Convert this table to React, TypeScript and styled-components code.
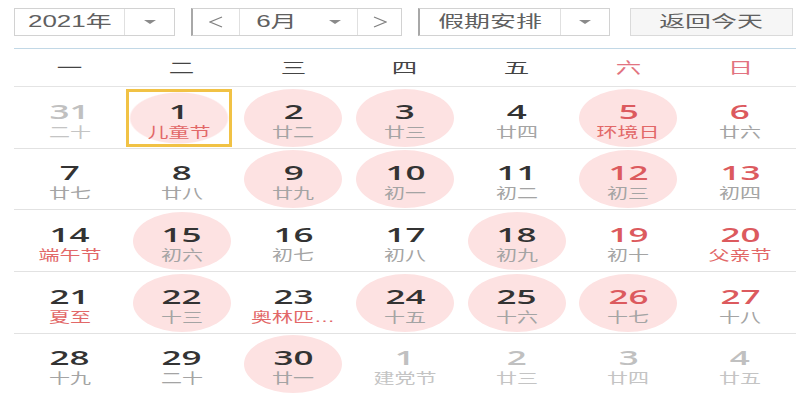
import React from 'react';
import styled, { createGlobalStyle } from 'styled-components';

type DayInfo = {
  d: number;
  l: string;
  other?: boolean;
  mark?: boolean;
  holiday?: boolean;
  selected?: boolean;
};

const weeks: DayInfo[][] = [
  [
    { d: 31, l: '二十', other: true },
    { d: 1, l: '儿童节', holiday: true, mark: true, selected: true },
    { d: 2, l: '廿二', mark: true },
    { d: 3, l: '廿三', mark: true },
    { d: 4, l: '廿四' },
    { d: 5, l: '环境日', holiday: true, mark: true },
    { d: 6, l: '廿六' },
  ],
  [
    { d: 7, l: '廿七' },
    { d: 8, l: '廿八' },
    { d: 9, l: '廿九', mark: true },
    { d: 10, l: '初一', mark: true },
    { d: 11, l: '初二' },
    { d: 12, l: '初三', mark: true },
    { d: 13, l: '初四' },
  ],
  [
    { d: 14, l: '端午节', holiday: true },
    { d: 15, l: '初六', mark: true },
    { d: 16, l: '初七' },
    { d: 17, l: '初八' },
    { d: 18, l: '初九', mark: true },
    { d: 19, l: '初十' },
    { d: 20, l: '父亲节', holiday: true },
  ],
  [
    { d: 21, l: '夏至', holiday: true },
    { d: 22, l: '十三', mark: true },
    { d: 23, l: '奥林匹…', holiday: true },
    { d: 24, l: '十五', mark: true },
    { d: 25, l: '十六', mark: true },
    { d: 26, l: '十七', mark: true },
    { d: 27, l: '十八' },
  ],
  [
    { d: 28, l: '十九' },
    { d: 29, l: '二十' },
    { d: 30, l: '廿一', mark: true },
    { d: 1, l: '建党节', other: true },
    { d: 2, l: '廿三', other: true },
    { d: 3, l: '廿四', other: true },
    { d: 4, l: '廿五', other: true },
  ],
];

const weekNames = ['一', '二', '三', '四', '五', '六', '日'];

export default function App(): JSX.Element {
  return (
    <>
      <GlobalStyle />
      <Page>
        <Toolbar>
          <Select $width={161}>
            <SelectText>
              <BarLabel>2021年</BarLabel>
            </SelectText>
            <ArrowSeg $width={49}>
              <Caret />
            </ArrowSeg>
          </Select>

          <Select $width={211} $strong>
            <StepSeg $width={46}>
              <Chevron dir="left" />
            </StepSeg>
            <MonthSeg>
              <SelectText>
                <BarLabel>6月</BarLabel>
              </SelectText>
              <ArrowSeg $width={44} $plain>
                <Caret />
              </ArrowSeg>
            </MonthSeg>
            <StepSeg $width={43} $last>
              <Chevron dir="right" />
            </StepSeg>
          </Select>

          <Select $width={192} $strong>
            <SelectText>
              <BarLabel>假期安排</BarLabel>
            </SelectText>
            <ArrowSeg $width={48}>
              <Caret />
            </ArrowSeg>
          </Select>

          <TodayButton>
            <BarLabel>返回今天</BarLabel>
          </TodayButton>
        </Toolbar>

        <WeekHeader>
          {weekNames.map((name, i) => (
            <WeekName key={name} $weekend={i >= 5}>
              <HeadLabel>{name}</HeadLabel>
            </WeekName>
          ))}
        </WeekHeader>

        {weeks.map((week, r) => (
          <WeekRow key={`week-${r}`} $last={r === weeks.length - 1}>
            {week.map((day, c) => (
              <Cell key={`day-${r}-${c}`}>
                <Day $mark={!!day.mark} $selected={!!day.selected}>
                  <Num $other={!!day.other} $weekend={c >= 5}>
                    {day.d}
                  </Num>
                  <Lunar $other={!!day.other} $holiday={!!day.holiday}>
                    {day.l}
                  </Lunar>
                </Day>
              </Cell>
            ))}
          </WeekRow>
        ))}
      </Page>
    </>
  );
}

function Chevron({ dir }: { dir: 'left' | 'right' }) {
  return (
    <svg width="14" height="12" viewBox="0 0 14 12">
      <polyline
        points={dir === 'left' ? '13,1 1,6 13,11' : '1,1 13,6 1,11'}
        fill="none"
        stroke="#808080"
        strokeWidth="1.3"
      />
    </svg>
  );
}

const GlobalStyle = createGlobalStyle`
  body {
    margin: 0;
    background: #fff;
    font-family: "Liberation Sans", "Noto Sans CJK SC", sans-serif;
  }
`;

const Page = styled.div`
  width: 800px;
  height: 400px;
  overflow: hidden;
  padding: 8px 4px 0 14px;
  box-sizing: border-box;
`;

const Toolbar = styled.div`
  display: flex;
  gap: 16px;
  height: 28px;
  width: 779px;
`;

const Select = styled.div<{ $width: number; $strong?: boolean }>`
  display: flex;
  width: ${(p) => p.$width}px;
  height: 28px;
  box-sizing: border-box;
  border: 1px solid #d2d2d2;
  border-left: ${(p) => (p.$strong ? '2px solid #a8a8a8' : '1px solid #d2d2d2')};
  background: #fff;
`;

const SelectText = styled.div`
  flex: 1;
  display: flex;
  align-items: center;
  justify-content: center;
`;

const ArrowSeg = styled.div<{ $width: number; $plain?: boolean }>`
  width: ${(p) => p.$width}px;
  display: flex;
  align-items: center;
  justify-content: center;
  border-left: ${(p) => (p.$plain ? 'none' : '1px solid #e0e0e0')};
`;

const StepSeg = styled.div<{ $width: number; $last?: boolean }>`
  width: ${(p) => p.$width}px;
  display: flex;
  align-items: center;
  justify-content: center;
  border-left: ${(p) => (p.$last ? '1px solid #e0e0e0' : 'none')};
  border-right: ${(p) => (p.$last ? 'none' : '1px solid #e0e0e0')};
`;

const MonthSeg = styled.div`
  flex: 1;
  display: flex;
`;

const Caret = styled.span`
  width: 0;
  height: 0;
  border-left: 6px solid transparent;
  border-right: 6px solid transparent;
  border-top: 4px solid #8a8a8a;
`;

const BarLabel = styled.span`
  display: inline-block;
  font-size: 16px;
  line-height: 18px;
  color: #606060;
  transform: scaleX(1.62);
`;

const TodayButton = styled.div`
  width: 163px;
  height: 28px;
  margin-left: 4px;
  box-sizing: border-box;
  border: 1px solid #dadada;
  background: #f6f6f6;
  display: flex;
  align-items: center;
  justify-content: center;
`;

const WeekHeader = styled.div`
  display: grid;
  grid-template-columns: repeat(7, 1fr);
  width: 782px;
  height: 39px;
  box-sizing: border-box;
  margin-top: 12px;
  border-top: 1px solid #c2d8e6;
  border-bottom: 1px solid #e4e4e4;
`;

const WeekName = styled.div<{ $weekend: boolean }>`
  display: flex;
  align-items: center;
  justify-content: center;
  color: ${(p) => (p.$weekend ? '#e27380' : '#444')};
`;

const HeadLabel = styled.span`
  display: inline-block;
  font-size: 15px;
  line-height: 18px;
  transform: scaleX(1.7);
`;

const WeekRow = styled.div<{ $last: boolean }>`
  display: grid;
  grid-template-columns: repeat(7, 1fr);
  width: 782px;
  height: 61.7px;
  box-sizing: border-box;
  border-bottom: ${(p) => (p.$last ? 'none' : '1px solid #e2e2e2')};
`;

const Cell = styled.div`
  display: flex;
  flex-direction: column;
  align-items: center;
  padding-top: 1.5px;
`;

const Day = styled.div<{ $mark: boolean; $selected: boolean }>`
  width: ${(p) => (p.$selected ? '106px' : '98px')};
  height: 58px;
  box-sizing: border-box;
  align-self: ${(p) => (p.$selected ? 'flex-start' : 'center')};
  display: flex;
  flex-direction: column;
  align-items: center;
  padding-top: ${(p) => (p.$selected ? '9px' : '12px')};
  border-radius: ${(p) => (p.$selected ? '0' : '50%')};
  border: ${(p) => (p.$selected ? '3px solid #f1c245' : 'none')};
  background: ${(p) =>
    p.$selected
      ? 'radial-gradient(ellipse closest-side, #fde4e4 96%, #fff 100%)'
      : p.$mark
        ? '#fde2e2'
        : 'transparent'};
`;

const Num = styled.span<{ $other: boolean; $weekend: boolean }>`
  display: inline-block;
  font-family: "Open Sans", "Liberation Sans", sans-serif;
  font-size: 20px;
  line-height: 22px;
  font-weight: 600;
  color: ${(p) => (p.$other ? '#c0c0c0' : p.$weekend ? '#dc5a5e' : '#333')};
  transform: scaleX(1.75);
`;

const Lunar = styled.span<{ $other: boolean; $holiday: boolean }>`
  display: inline-block;
  white-space: nowrap;
  font-size: 14px;
  line-height: 18px;
  color: ${(p) => (p.$other ? '#c4c4c4' : p.$holiday ? '#e26868' : '#a4a4a4')};
  transform: scaleX(1.5);
`;
